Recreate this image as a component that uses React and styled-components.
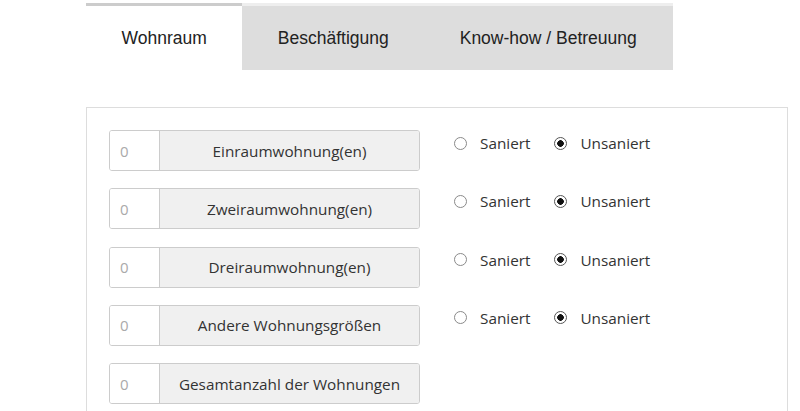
import React, { useState } from "react";
import styled, { createGlobalStyle } from "styled-components";

const GlobalStyle = createGlobalStyle`
  html, body {
    margin: 0;
    padding: 0;
    background: #fff;
    overflow: hidden;
  }
  body {
    font-family: "Open Sans", "Liberation Sans", sans-serif;
    color: #333;
  }
`;

const Page = styled.div`
  width: 702px;
  margin-left: 86px;
  padding-top: 3px;
`;

const TabBar = styled.div`
  display: flex;
  width: 587px;
  background: #ddd;
  border-top: 3px solid #eee;
`;

const Tab = styled.div`
  height: 64px;
  margin-top: -3px;
  border-top: 3px solid ${(p) => (p.$active ? "#ccc" : "#eee")};
  background: ${(p) => (p.$active ? "#fff" : "#ddd")};
  padding: 0 35.5px;
  display: flex;
  align-items: center;
  font-family: "Liberation Sans", Arial, sans-serif;
  font-size: 17.5px;
  color: #222;
  cursor: pointer;
`;

const Panel = styled.div`
  margin-top: 37px;
  border: 1px solid #ddd;
  padding: 22px 22px 30px;
  display: flex;
  flex-direction: column;
  gap: 17.3px;
`;

const Row = styled.div`
  display: flex;
  align-items: flex-start;
  gap: 34px;
`;

const InputGroup = styled.div`
  display: flex;
  width: 311px;
  height: 41px;
  box-sizing: border-box;
  border: 1px solid #ccc;
  border-radius: 3px;
  overflow: hidden;
`;

const NumberInput = styled.input`
  width: 50px;
  box-sizing: border-box;
  border: none;
  border-right: 1px solid #ccc;
  padding: 0 10px;
  font-family: "Open Sans", sans-serif;
  font-size: 15px;
  color: #333;
  outline: none;
  &::placeholder {
    color: #aaa;
  }
`;

const Addon = styled.div`
  flex: 1;
  background: #f0f0f0;
  display: flex;
  align-items: center;
  justify-content: center;
  font-size: 15.3px;
  color: #333;
`;

const RadioGroup = styled.div`
  display: flex;
  align-items: center;
  gap: 24px;
  padding-top: 3px;
  height: 20px;
`;

const RadioLabel = styled.label`
  display: flex;
  align-items: center;
  gap: 13px;
  font-size: 15.3px;
  line-height: 20px;
  color: #333;
  cursor: pointer;
`;

const Radio = styled.input`
  appearance: none;
  margin: 0;
  width: 13px;
  height: 13px;
  border: 1px solid #8a8a8a;
  border-radius: 50%;
  background: #fff;
  box-sizing: border-box;
  &:checked {
    border-color: #555;
    background: radial-gradient(circle, #111 0 3px, #fff 3.6px);
  }
`;

const rows = [
  { id: "ein", label: "Einraumwohnung(en)", radios: true },
  { id: "zwei", label: "Zweiraumwohnung(en)", radios: true },
  { id: "drei", label: "Dreiraumwohnung(en)", radios: true },
  { id: "andere", label: "Andere Wohnungsgrößen", radios: true },
  { id: "gesamt", label: "Gesamtanzahl der Wohnungen", radios: false },
];

const tabs = ["Wohnraum", "Beschäftigung", "Know-how / Betreuung"];

export default function App() {
  const [active, setActive] = useState(0);
  const [state, setState] = useState({
    ein: "unsaniert",
    zwei: "unsaniert",
    drei: "unsaniert",
    andere: "unsaniert",
  });

  return (
    <>
      <GlobalStyle />
      <Page>
        <TabBar>
          {tabs.map((t, i) => (
            <Tab key={t} $active={i === active} onClick={() => setActive(i)}>
              {t}
            </Tab>
          ))}
        </TabBar>
        <Panel>
          {rows.map((r) => (
            <Row key={r.id}>
              <InputGroup>
                <NumberInput type="text" placeholder="0" />
                <Addon>{r.label}</Addon>
              </InputGroup>
              {r.radios && (
                <RadioGroup>
                  <RadioLabel>
                    <Radio
                      type="radio"
                      name={r.id}
                      checked={state[r.id] === "saniert"}
                      onChange={() => setState({ ...state, [r.id]: "saniert" })}
                    />
                    Saniert
                  </RadioLabel>
                  <RadioLabel>
                    <Radio
                      type="radio"
                      name={r.id}
                      checked={state[r.id] === "unsaniert"}
                      onChange={() => setState({ ...state, [r.id]: "unsaniert" })}
                    />
                    Unsaniert
                  </RadioLabel>
                </RadioGroup>
              )}
            </Row>
          ))}
        </Panel>
      </Page>
    </>
  );
}
